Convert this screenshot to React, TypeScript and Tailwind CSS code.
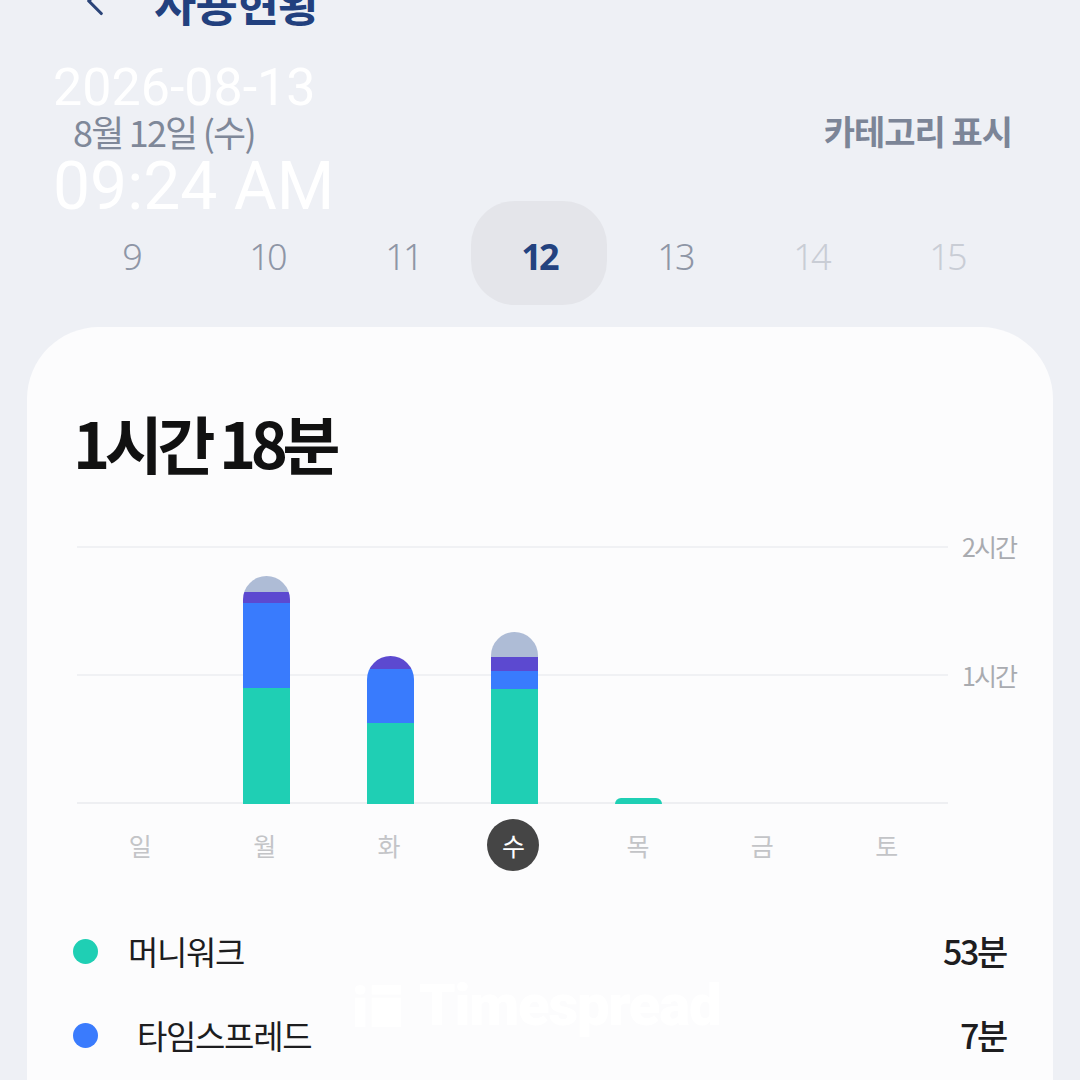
import { ChevronLeft } from 'lucide-react'

const KR = { fontFamily: '"Noto Sans CJK KR", "Noto Sans", sans-serif' }

const DATES = [
  { n: '9', tone: 'text-[#8e96a6]' },
  { n: '10', tone: 'text-[#8e96a6]' },
  { n: '11', tone: 'text-[#8e96a6]' },
  { n: '12', tone: 'text-[#23427f] font-bold', active: true },
  { n: '13', tone: 'text-[#8e96a6]' },
  { n: '14', tone: 'text-[#c9cdd5]' },
  { n: '15', tone: 'text-[#c9cdd5]' },
]

// heights in px (1시간 = 129px)
const BARS = [
  { day: '일', teal: 0, blue: 0, purple: 0, gray: 0 },
  { day: '월', teal: 116, blue: 85, purple: 11, gray: 16 },
  { day: '화', teal: 81, blue: 54, purple: 13, gray: 0 },
  { day: '수', teal: 115, blue: 18, purple: 14, gray: 25, today: true },
  { day: '목', teal: 6, blue: 0, purple: 0, gray: 0 },
  { day: '금', teal: 0, blue: 0, purple: 0, gray: 0 },
  { day: '토', teal: 0, blue: 0, purple: 0, gray: 0 },
]

const APPS = [
  { name: '머니워크', time: '53분', dot: 'bg-[#1fcfb4]', indent: 'ml-[30px]' },
  { name: '타임스프레드', time: '7분', dot: 'bg-[#3a7bfd]', indent: 'ml-[39px]' },
]

export default function App() {
  return (
    <div className="relative flex h-[1080px] w-[1080px] flex-col overflow-hidden bg-[#eef0f5]" style={KR}>
      {/* Header, scrolled partly off screen */}
      <div className="-mt-[24px] flex h-[50px] items-center pl-[70px]">
        <ChevronLeft className="h-[50px] w-[50px] text-[#2b4478]" strokeWidth={1.5} />
        <span className="ml-[34px] text-[46px] font-bold leading-none tracking-[-0.02em] text-[#22407e]">
          사용현황
        </span>
      </div>

      {/* Date + category toggle */}
      <div className="mt-[85px] flex h-[40px] items-center justify-between pl-[73px] pr-[68px]">
        <span className="text-[36px] leading-none tracking-[-0.05em] text-[#7f8899]">
          8월 12일 (수)
        </span>
        <span className="text-[34px] font-semibold leading-none tracking-[-0.03em] text-[#7c8597]">
          카테고리 표시
        </span>
      </div>

      {/* Date strip */}
      <div className="mt-[50px] flex pl-[63px]">
        {DATES.map((d) => (
          <div
            key={d.n}
            className={`flex h-[104px] w-[136px] items-center justify-center rounded-[44px] pt-[8px] ${
              d.active ? 'bg-[#e4e5ea]' : ''
            }`}
          >
            <span
              className={`text-[36px] leading-none tracking-[-0.08em] ${d.tone}`}
              style={{ fontFamily: '"Noto Sans", sans-serif', fontWeight: d.active ? 700 : 300 }}
            >
              {d.n}
            </span>
          </div>
        ))}
      </div>

      {/* Card */}
      <div className="mx-[27px] mt-[22px] flex-1 rounded-t-[72px] bg-[#fcfcfd] pl-[46px] pr-[47px] pt-[83px]">
        <div className="text-[63px] font-bold leading-none tracking-[-0.085em] text-[#111]">1시간 18분</div>

        {/* Chart */}
        <div className="mt-[73px] flex pl-[4px]">
          <div className="relative h-[258px] w-[871px] shrink-0">
            <div className="absolute inset-0 flex flex-col justify-between">
              <div className="h-[2px] bg-[#f0f1f4]" />
              <div className="h-[2px] bg-[#f0f1f4]" />
              <div className="h-[2px] bg-[#eeeff2]" />
            </div>
            <div className="absolute inset-y-0 left-[3px] right-0 flex items-end">
              {BARS.map((b) => {
                const total = b.teal + b.blue + b.purple + b.gray
                return (
                  <div key={b.day} className="flex flex-1 justify-center">
                    {total > 0 && (
                      <div className="flex w-[47px] flex-col overflow-hidden rounded-t-[24px]">
                        <div className="bg-[#aebcd6]" style={{ height: b.gray }} />
                        <div className="bg-[#5c49d0]" style={{ height: b.purple }} />
                        <div className="bg-[#397bfd]" style={{ height: b.blue }} />
                        <div className="bg-[#1fcfb4]" style={{ height: b.teal }} />
                      </div>
                    )}
                  </div>
                )
              })}
            </div>
          </div>
          <div className="ml-[14px] flex h-[258px] w-[60px] shrink-0 flex-col justify-between">
            <div className="flex h-0 items-center">
              <span className="whitespace-nowrap text-[25px] leading-none tracking-[-0.08em] text-[#a9abb0]">
                2시간
              </span>
            </div>
            <div className="flex h-0 items-center">
              <span className="whitespace-nowrap text-[25px] leading-none tracking-[-0.08em] text-[#a9abb0]">
                1시간
              </span>
            </div>
            <div className="h-0" />
          </div>
        </div>

        {/* Weekday labels */}
        <div className="mt-[15px] flex w-[876px] pl-[5px]">
          {BARS.map((b) => (
            <div key={b.day} className="flex flex-1 justify-center">
              {b.today ? (
                <div className="flex h-[52px] w-[52px] items-center justify-center rounded-full bg-[#454545]">
                  <span className="text-[25px] leading-none text-white">{b.day}</span>
                </div>
              ) : (
                <div className="flex h-[52px] items-center">
                  <span className="text-[25px] leading-none text-[#c3c4c7]">{b.day}</span>
                </div>
              )}
            </div>
          ))}
        </div>

        {/* App list */}
        <div className="mt-[60px] flex flex-col gap-[44px]">
          {APPS.map((a) => (
            <div key={a.name} className="flex h-[40px] items-center">
              <span className={`h-[25px] w-[25px] rounded-full ${a.dot}`} />
              <span className={`${a.indent} text-[33px] leading-none tracking-[-0.04em] text-[#1d1d1f]`}>
                {a.name}
              </span>
              <span className="ml-auto text-[34px] font-medium leading-none tracking-[-0.07em] text-[#1d1d1f]">
                {a.time}
              </span>
            </div>
          ))}
        </div>
      </div>

      {/* Screenshot timestamp overlay */}
      <div
        className="pointer-events-none absolute left-[53px] top-[62px] flex flex-col text-white"
        style={{ fontFamily: 'Roboto, "Noto Sans", sans-serif' }}
      >
        <span className="text-[52px] font-normal leading-none">2026-08-13</span>
        <span className="mt-[40px] text-[66px] font-normal leading-none">09:24 AM</span>
      </div>

      {/* App watermark */}
      <div className="pointer-events-none absolute left-[355px] top-[976px] flex items-center gap-[18px] text-white">
        <svg width="46" height="44" viewBox="0 0 44 42" fill="#ffffff">
          <rect x="0" y="2" width="10" height="9" rx="4" />
          <rect x="0" y="14" width="10" height="28" />
          <rect x="16" y="2" width="28" height="9" />
          <rect x="16" y="14" width="28" height="28" />
        </svg>
        <span
          className="text-[58px] font-black leading-none tracking-[-0.02em]"
          style={{ fontFamily: 'Roboto, "Noto Sans", sans-serif' }}
        >
          Timespread
        </span>
      </div>
    </div>
  )
}
